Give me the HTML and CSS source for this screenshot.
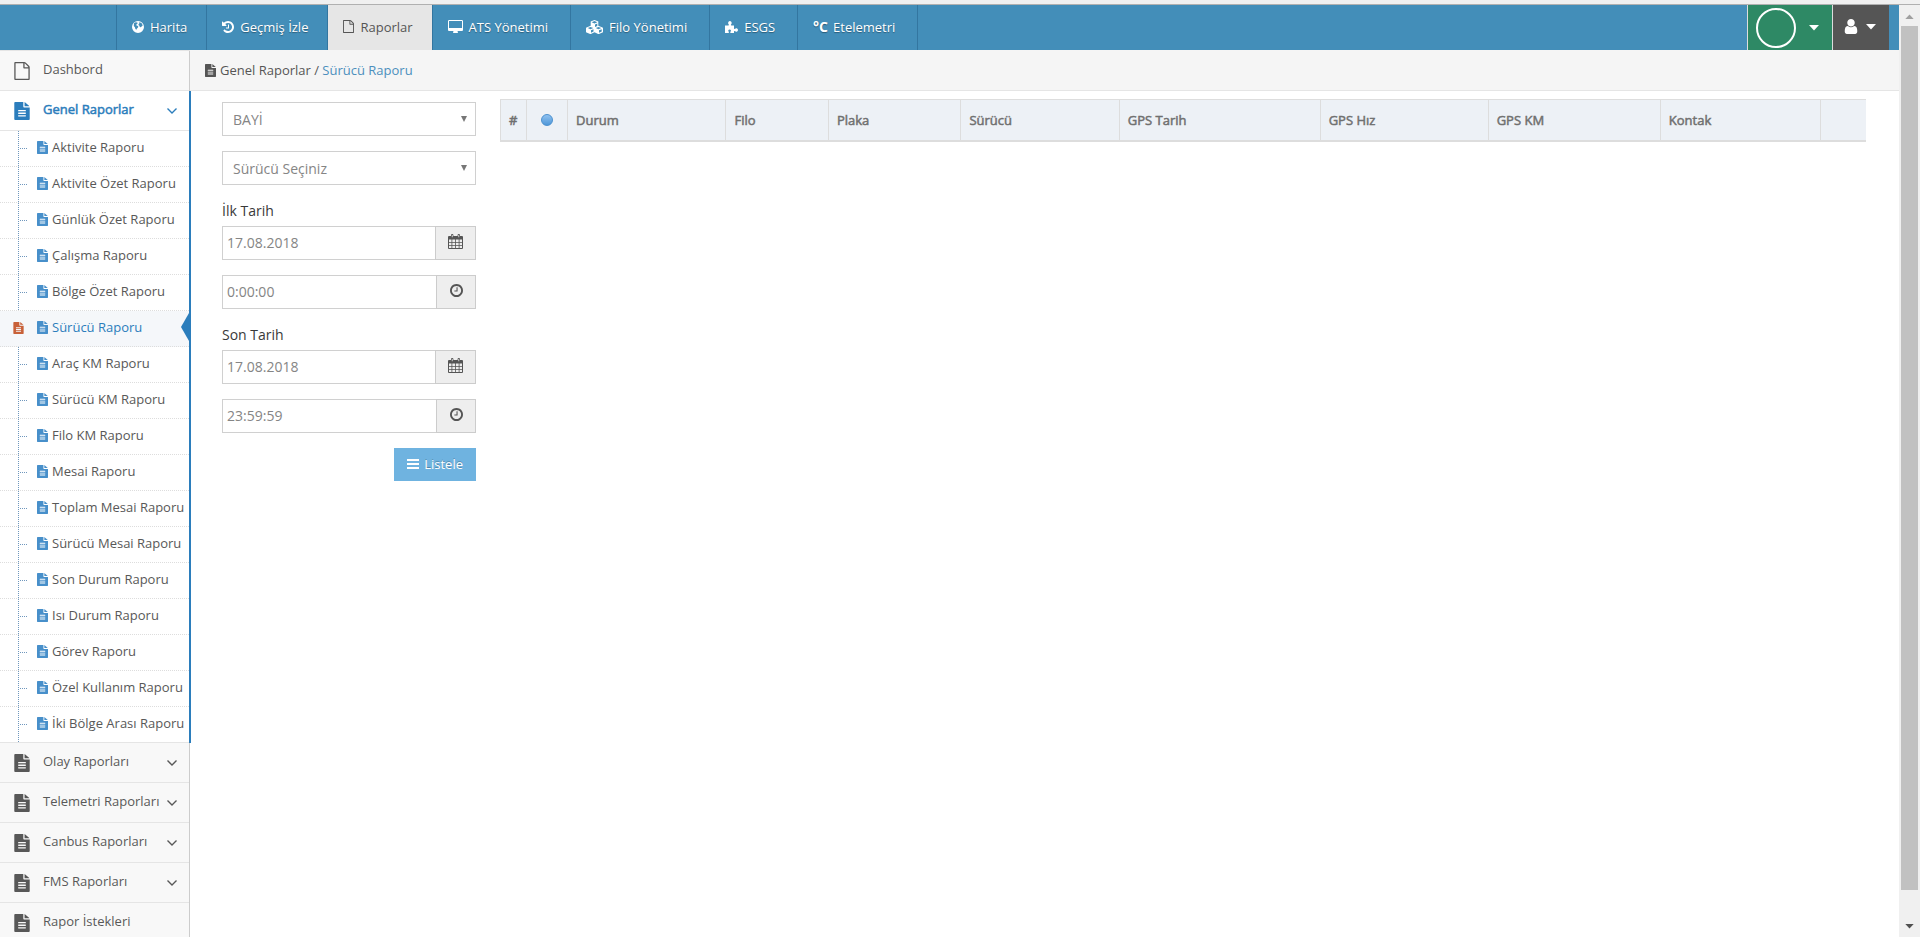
FILE: index.html
```html
<!DOCTYPE html>
<html lang="tr">
<head>
<meta charset="utf-8">
<title>Sürücü Raporu</title>
<link rel="stylesheet" href="styles.css">
</head>
<body>
<svg class="sprite" aria-hidden="true">
  <symbol id="file-text" viewBox="128 0 1536 1792"><path d="M1596 380q14 14 28 36h-472v-412q22 14 36 28zm-476 164h544v1152q0 40-28 68t-68 28h-1344q-40 0-68-28t-28-68v-1600q0-40 28-68t68-28h800v448q0 40 28 68t68 28zm160 864v-64q0-14-9-23t-23-9h-704q-14 0-23 9t-9 23v64q0 14 9 23t23 9h704q14 0 23-9t9-23zm0-256v-64q0-14-9-23t-23-9h-704q-14 0-23 9t-9 23v64q0 14 9 23t23 9h704q14 0 23-9t9-23zm0-256v-64q0-14-9-23t-23-9h-704q-14 0-23 9t-9 23v64q0 14 9 23t23 9h704q14 0 23-9t9-23z"/></symbol>
  <symbol id="file-o" viewBox="128 0 1536 1792"><path d="M1596 380q28 28 48 76t20 88v1152q0 40-28 68t-68 28h-1344q-40 0-68-28t-28-68v-1600q0-40 28-68t68-28h896q40 0 88 20t76 48zm-444-244v376h376q-10-29-22-41l-313-313q-12-12-41-22zm384 1528v-1024h-416q-40 0-68-28t-28-68v-416h-768v1536h1280z"/></symbol>
  <symbol id="globe" viewBox="0 0 12 12"><path fill-rule="evenodd" d="M6 0a6 6 0 1 0 0 12A6 6 0 0 0 6 0zM2 2.2l1.600-.9 1.800.3.200 1-1.200.8-.2.9 1.200.4.900.8-.3 1.100-1 .8-.6 1.300-1-.7-.5-1.700-1.100-1.200.1-1.600zM6.700 1l1.600.4 1.600 1.200.8 1.800-.9.8-.9 1.100-1.100-.4-.4-1.200-1-.6.4-1.400.8-.6z"/></symbol>
  <symbol id="history" viewBox="128 128 1536 1536"><path d="M1664 896q0 156-61 298t-164 245-245 164-298 61q-172 0-327-72.5t-264-204.5q-7-10-6.500-22.500t8.500-20.500l137-138q10-9 25-9 16 2 23 12 73 95 179 147t225 52q104 0 198.500-40.500t163.500-109.500 109.500-163.500 40.500-198.500-40.500-198.500-109.500-163.500-163.500-109.500-198.500-40.500q-98 0-188 35.500t-160 101.500l137 138q31 30 14 69-17 40-59 40h-448q-26 0-45-19t-19-45v-448q0-42 40-59 39-17 69 14l130 129q107-101 244.500-156.500t284.500-55.500q156 0 298 61t245 164 164 245 61 298zm-640-288v448q0 14-9 23t-23 9h-320q-14 0-23-9t-9-23v-64q0-14 9-23t23-9h224v-352q0-14 9-23t23-9h64q14 0 23 9t9 23z"/></symbol>
  <symbol id="desktop" viewBox="-64 0 1920 1664"><path d="M1728 992v-832q0-13-9.500-22.500t-22.500-9.500h-1600q-13 0-22.500 9.500t-9.500 22.500v832q0 13 9.500 22.500t22.500 9.500h1600q13 0 22.500-9.500t9.500-22.500zm128-832v1088q0 66-47 113t-113 47h-544q0 37 16 77.500t32 71 16 43.500q0 26-19 45t-45 19h-512q-26 0-45-19t-19-45q0-14 16-44t32-70 16-78h-544q-66 0-113-47t-47-113v-1088q0-66 47-113t113-47h1600q66 0 113 47t47 113z"/></symbol>
  <symbol id="cubes" viewBox="0 0 17 14"><path fill-rule="evenodd" d="M8.500 0l3.800 1.600v4.100l4.200 1.800q.5.300.5.800v3.400q0 .5-.5.800l-3.600 1.500h-.8l-3.600-1.700-3.600 1.700h-.8L.5 12.500q-.5-.3-.5-.8V8.300q0-.5.500-.8l4.200-1.800V1.600zM8.500 1.100L5.600 2.200l2.900 1.200 2.900-1.200zM9 4.500v2.600l2.300-1V3.500zM4.500 6.900L1.700 8.100l2.800 1.200 2.800-1.200zM12.500 6.900L9.700 8.100l2.800 1.200 2.800-1.200zM5 10.300v2.500l2.500-1.200V9.200zM13 10.300v2.500l2.700-1.200V9.200z"/></symbol>
  <symbol id="puzzle" viewBox="0 0 13 12"><path d="M0 4.500h3.200q.9 0 .7-.8Q3 2.800 3.100 1.700 3.400.1 4.900.1T6.700 1.700q.1 1.100-.8 2-.2.800.7.800H9v2.700q0 .9.800.7 1-.9 2-.6 1.200.4 1.200 1.700t-1.200 1.700q-1 .3-2-.6-.8-.2-.8.600V12H5.800q-.8 0-.5-.9.9-1 .6-1.800-.3-.9-1.300-.9t-1.300.9q-.3.800.6 1.800.3.900-.6.900H0z"/></symbol>
  <symbol id="user" viewBox="256 128 1280 1536"><path d="M1536 1399q0 109-62.500 187t-150.500 78h-854q-88 0-150.500-78t-62.500-187q0-85 8.500-160.500t31.500-152 58.500-131 94-89 134.500-34.500q131 128 313 128t313-128q76 0 134.500 34.500t94 89 58.500 131 31.500 152 8.500 160.500zm-256-887q0 159-112.500 271.500t-271.500 112.500-271.500-112.500-112.500-271.500 112.500-271.500 271.500-112.500 271.500 112.500 112.500 271.500z"/></symbol>
  <symbol id="clock" viewBox="128 128 1536 1536"><path d="M1024 544v448q0 14-9 23t-23 9h-320q-14 0-23-9t-9-23v-64q0-14 9-23t23-9h224v-352q0-14 9-23t23-9h64q14 0 23 9t9 23zm416 352q0-148-73-273t-198-198-273-73-273 73-198 198-73 273 73 273 198 198 273 73 273-73 198-198 73-273zm224 0q0 209-103 385.500t-279.500 279.500-385.500 103-385.500-103-279.500-279.500-103-385.500 103-385.500 279.500-279.500 385.500-103 385.500 103 279.500 279.500 103 385.500z"/></symbol>
  <symbol id="calendar" viewBox="0 0 15 15"><path fill-rule="evenodd" d="M1 2h2V1q0-1 1.200-1T5.400 1v1h4.200V1q0-1 1.200-1T12 1v1h2q1 0 1 1v11q0 1-1 1H1q-1 0-1-1V3q0-1 1-1zM1 5.500V8h2.500V5.500zm3.300 0V8h2.800V5.500zm3.600 0V8h2.800V5.500zm3.600 0V8H14V5.500zM1 8.700v2.500h2.500V8.700zm3.300 0v2.500h2.800V8.700zm3.600 0v2.500h2.800V8.700zm3.600 0v2.500H14V8.700zM1 12v2h2.500v-2zm3.300 0v2h2.800v-2zm3.600 0v2h2.800v-2zm3.600 0v2H14v-2zM3.800 1v2.200h.8V1zm6.600 0v2.200h.8V1z"/></symbol>
  <symbol id="chevron" viewBox="0 0 10 6"><path d="M.5.600L5 5 9.500.600" fill="none" stroke="currentColor" stroke-width="1.400"/></symbol>
  <symbol id="caret" viewBox="0 0 10 6"><path d="M0 0h10L5 5.500z"/></symbol>
  <symbol id="bars" viewBox="0 0 12 10"><path d="M0 0h12v2H0zM0 4h12v2H0zM0 8h12v2H0z"/></symbol>
</svg>

<div class="top-strip"></div>
<div class="window">
  <div class="app">
    <header class="navbar">
      <nav class="nav">
        <a href="#" class="nav-item"><svg class="i12"><use href="#globe"/></svg>Harita</a>
        <a href="#" class="nav-item"><svg class="i12"><use href="#history"/></svg>Geçmiş İzle</a>
        <a href="#" class="nav-item active"><svg class="i-page"><use href="#file-o"/></svg>Raporlar</a>
        <a href="#" class="nav-item wide"><svg class="i-desktop"><use href="#desktop"/></svg>ATS Yönetimi</a>
        <a href="#" class="nav-item wide"><svg class="i-cubes"><use href="#cubes"/></svg>Filo Yönetimi</a>
        <a href="#" class="nav-item wide"><svg class="i-puzzle"><use href="#puzzle"/></svg>ESGS</a>
        <a href="#" class="nav-item wide last"><span class="celsius">°C</span>Etelemetri</a>
      </nav>
      <div class="account">
        <button type="button" class="brand-btn" aria-label="Firma"><span class="ring"></span><svg class="caret"><use href="#caret"/></svg></button>
        <button type="button" class="user-btn" aria-label="Kullanıcı"><svg class="i-user"><use href="#user"/></svg><svg class="caret"><use href="#caret"/></svg></button>
      </div>
    </header>

    <div class="body">
      <aside class="sidebar">
        <a href="#" class="group"><svg class="i-big"><use href="#file-o"/></svg><span>Dashbord</span></a>
        <div class="open-group">
          <a href="#" class="group open"><svg class="i-big"><use href="#file-text"/></svg><span>Genel Raporlar</span><svg class="chevron"><use href="#chevron"/></svg></a>
          <ul class="submenu">
            <li><a href="#"><svg class="i-sub"><use href="#file-text"/></svg>Aktivite Raporu</a></li>
            <li><a href="#"><svg class="i-sub"><use href="#file-text"/></svg>Aktivite Özet Raporu</a></li>
            <li><a href="#"><svg class="i-sub"><use href="#file-text"/></svg>Günlük Özet Raporu</a></li>
            <li><a href="#"><svg class="i-sub"><use href="#file-text"/></svg>Çalışma Raporu</a></li>
            <li><a href="#"><svg class="i-sub"><use href="#file-text"/></svg>Bölge Özet Raporu</a></li>
            <li class="current"><svg class="marker"><use href="#file-text"/></svg><a href="#"><svg class="i-sub"><use href="#file-text"/></svg>Sürücü Raporu</a></li>
            <li><a href="#"><svg class="i-sub"><use href="#file-text"/></svg>Araç KM Raporu</a></li>
            <li><a href="#"><svg class="i-sub"><use href="#file-text"/></svg>Sürücü KM Raporu</a></li>
            <li><a href="#"><svg class="i-sub"><use href="#file-text"/></svg>Filo KM Raporu</a></li>
            <li><a href="#"><svg class="i-sub"><use href="#file-text"/></svg>Mesai Raporu</a></li>
            <li><a href="#"><svg class="i-sub"><use href="#file-text"/></svg>Toplam Mesai Raporu</a></li>
            <li><a href="#"><svg class="i-sub"><use href="#file-text"/></svg>Sürücü Mesai Raporu</a></li>
            <li><a href="#"><svg class="i-sub"><use href="#file-text"/></svg>Son Durum Raporu</a></li>
            <li><a href="#"><svg class="i-sub"><use href="#file-text"/></svg>Isı Durum Raporu</a></li>
            <li><a href="#"><svg class="i-sub"><use href="#file-text"/></svg>Görev Raporu</a></li>
            <li><a href="#"><svg class="i-sub"><use href="#file-text"/></svg>Özel Kullanım Raporu</a></li>
            <li><a href="#"><svg class="i-sub"><use href="#file-text"/></svg>İki Bölge Arası Raporu</a></li>
          </ul>
        </div>
        <a href="#" class="group"><svg class="i-big"><use href="#file-text"/></svg><span>Olay Raporları</span><svg class="chevron"><use href="#chevron"/></svg></a>
        <a href="#" class="group"><svg class="i-big"><use href="#file-text"/></svg><span>Telemetri Raporları</span><svg class="chevron"><use href="#chevron"/></svg></a>
        <a href="#" class="group"><svg class="i-big"><use href="#file-text"/></svg><span>Canbus Raporları</span><svg class="chevron"><use href="#chevron"/></svg></a>
        <a href="#" class="group"><svg class="i-big"><use href="#file-text"/></svg><span>FMS Raporları</span><svg class="chevron"><use href="#chevron"/></svg></a>
        <a href="#" class="group"><svg class="i-big"><use href="#file-text"/></svg><span>Rapor İstekleri</span></a>
      </aside>

      <main class="main">
        <div class="breadcrumb"><svg class="i-sub"><use href="#file-text"/></svg><span>Genel Raporlar / <a href="#">Sürücü Raporu</a></span></div>
        <div class="content">
          <form class="filters">
            <div class="select"><select aria-label="Bayi"><option>BAYİ</option></select></div>
            <div class="select"><select aria-label="Sürücü"><option>Sürücü Seçiniz</option></select></div>
            <div class="field">
              <label for="d1">İlk Tarih</label>
              <div class="input-group"><input id="d1" type="text" value="17.08.2018"><button type="button" class="addon date" aria-label="Takvim"><svg class="i-cal"><use href="#calendar"/></svg></button></div>
            </div>
            <div class="input-group"><input type="text" value="0:00:00" aria-label="İlk saat"><button type="button" class="addon" aria-label="Saat"><svg class="i-clock"><use href="#clock"/></svg></button></div>
            <div class="field">
              <label for="d2">Son Tarih</label>
              <div class="input-group"><input id="d2" type="text" value="17.08.2018"><button type="button" class="addon date" aria-label="Takvim"><svg class="i-cal"><use href="#calendar"/></svg></button></div>
            </div>
            <div class="input-group"><input type="text" value="23:59:59" aria-label="Son saat"><button type="button" class="addon" aria-label="Saat"><svg class="i-clock"><use href="#clock"/></svg></button></div>
            <button type="button" class="submit"><svg class="i-bars"><use href="#bars"/></svg>Listele</button>
          </form>
          <div class="results">
            <table>
              <colgroup>
                <col class="c-no"><col class="c-dot"><col class="c-durum"><col class="c-filo"><col class="c-plaka"><col class="c-surucu"><col class="c-tarih"><col class="c-hiz"><col class="c-km"><col class="c-kontak"><col>
              </colgroup>
              <thead>
                <tr><th>#</th><th class="dot-cell"><span class="dot"></span></th><th>Durum</th><th>Filo</th><th>Plaka</th><th>Sürücü</th><th>GPS Tarih</th><th>GPS Hız</th><th>GPS KM</th><th>Kontak</th><th></th></tr>
              </thead>
            </table>
          </div>
        </div>
      </main>
    </div>
  </div>
  <div class="scrollbar">
    <svg class="arrow up"><use href="#caret"/></svg>
    <div class="track"><div class="thumb"></div></div>
    <svg class="arrow down"><use href="#caret"/></svg>
  </div>
</div>
</body>
</html>
```

FILE: styles.css
```css
* { box-sizing: border-box; }

body {
  margin: 0;
  height: 100vh;
  display: flex;
  flex-direction: column;
  overflow: hidden;
  background: #fff;
  color: #393939;
  font-family: "Open Sans", "Noto Sans", sans-serif;
  font-size: 13px;
  line-height: 20px;
}

a { color: inherit; text-decoration: none; }
button { margin: 0; padding: 0; border: 0; font: inherit; color: inherit; cursor: pointer; }
svg { display: block; flex: none; fill: currentColor; }
.sprite { position: absolute; width: 0; height: 0; }

.top-strip { flex: none; height: 5px; background: #f0f0f0; border-bottom: 1px solid #b0b0b0; }
.window { flex: 1; min-height: 0; display: flex; }
.app { flex: 1; min-width: 0; display: flex; flex-direction: column; }

/* Top navigation */
.navbar {
  flex: none;
  height: 45px;
  display: flex;
  justify-content: space-between;
  padding: 0 10px 0 116px;
  background: #438eb9;
  color: #fff;
}
.nav, .account { display: flex; }
.nav-item {
  display: flex;
  align-items: center;
  gap: 6px;
  padding: 0 19px 2px 15px;
  border-left: 1px solid #3376a0;
  text-shadow: 0 1px 1px rgba(0, 0, 0, .35);
}
.nav-item.wide { padding-right: 22px; }
.nav-item.last { border-right: 1px solid #3376a0; gap: 5px; }
.nav-item.active { background: #e6e6e6; color: #555; text-shadow: none; }
.celsius { font-weight: 700; font-size: 14px; }

.i12 { width: 12px; height: 12px; }
.i-page { width: 11px; height: 13px; }
.i-desktop { width: 15px; height: 13px; }
.i-cubes { width: 17px; height: 14px; }
.i-puzzle { width: 13px; height: 12px; }
.i-user { width: 14px; height: 15px; }
.caret { width: 10px; height: 6px; }

.brand-btn, .user-btn {
  display: flex;
  align-items: center;
  border-left: 1px solid #ddd;
  color: #fff;
}
.brand-btn { gap: 13px; padding: 0 13px 0 8px; background: #2e8965; }
.user-btn { gap: 8px; padding: 0 13px 2px 11px; background: #555; }
.ring { width: 40px; height: 40px; border: 2px solid #fff; border-radius: 50%; }

/* Sidebar */
.body { flex: 1; min-height: 0; display: flex; }
.sidebar {
  flex: none;
  width: 190px;
  background: #f8f8f8;
  border-top: 1px solid #e5e5e5;
  box-shadow: inset -1px 0 #ccc;
  color: #585858;
}
.group {
  display: flex;
  align-items: center;
  height: 40px;
  margin-right: 1px;
  padding: 0 12px 0 14px;
  border-bottom: 1px solid #e5e5e5;
}
.group span { flex: 1; margin-left: 13px; padding-bottom: 4px; white-space: nowrap; }
.i-big { width: 16px; height: 18px; }
.chevron { width: 10px; height: 6px; }
.open-group { background: #fff; border-right: 2px solid #2b7dbc; width: 191px; }
.group.open { margin: 0; color: #2b7dbc; -webkit-text-stroke: 0.5px #2b7dbc; }

.submenu {
  position: relative;
  margin: 0;
  padding: 0;
  list-style: none;
  border-bottom: 1px solid #e5e5e5;
}
.submenu::before {
  content: "";
  position: absolute;
  top: 0;
  bottom: 0;
  left: 18px;
  border-left: 1px dotted #6f97bd;
}
.submenu li { position: relative; height: 36px; border-bottom: 1px dotted #ddd; }
.submenu li:last-child { height: 35px; border-bottom: 0; }
.submenu li::before {
  content: "";
  position: absolute;
  top: 17px;
  left: 20px;
  width: 7px;
  border-top: 1px dotted #6f97bd;
}
.submenu a {
  display: flex;
  align-items: center;
  gap: 4px;
  height: 32px;
  padding-left: 37px;
  white-space: nowrap;
}
.i-sub { width: 11px; height: 13px; }
.submenu .i-sub { color: #478fca; }
.submenu .current { background: #f5f7fa; color: #2b7dbc; }
.submenu .current::before { display: none; }
.submenu .current::after {
  content: "";
  position: absolute;
  top: 2px;
  right: 0;
  border: solid transparent;
  border-width: 14px 8px 14px 0;
  border-right-color: #2b7dbc;
}
.marker { position: absolute; top: 11px; left: 13px; width: 11px; height: 12px; color: #c86139; }

/* Page */
.main { flex: 1; min-width: 0; }
.breadcrumb {
  display: flex;
  align-items: center;
  gap: 4px;
  height: 41px;
  padding-left: 15px;
  background: #f5f5f5;
  border-bottom: 1px solid #e5e5e5;
  color: #555;
}
.breadcrumb a { color: #4c8fbd; }
.content { display: flex; align-items: flex-start; gap: 24px; padding: 8px 33px 0 32px; }
.filters {
  flex: none;
  width: 254px;
  display: flex;
  flex-direction: column;
  gap: 15px;
  padding-top: 3px;
  font-size: 14px;
}
.filters label { display: block; height: 26px; line-height: 22px; }
.select { position: relative; }
.select::after {
  content: "";
  position: absolute;
  top: 14px;
  right: 9px;
  border: solid transparent;
  border-width: 6px 3px 0;
  border-top-color: #777;
}
select, input {
  height: 34px;
  border: 1px solid #d0d0d0;
  border-radius: 0;
  background: #fff;
  color: #858585;
  font: inherit;
}
select { display: block; width: 100%; padding: 2px 24px 0 10px; appearance: none; }
input { flex: 1; min-width: 0; padding: 0 4px 2px; border-right: 0; }
.input-group { display: flex; }
.addon {
  width: 40px;
  height: 34px;
  display: flex;
  align-items: center;
  justify-content: center;
  padding-bottom: 3px;
  border: 1px solid #ccc;
  background: #eee;
  color: #555;
}
.addon.date { width: 41px; }
.i-cal { width: 15px; height: 15px; }
.i-clock { width: 13px; height: 13px; }
.submit {
  align-self: flex-end;
  display: flex;
  align-items: center;
  gap: 5px;
  height: 33px;
  padding: 0 13px 2px;
  background: #6fb3e0;
  color: #fff;
  font-size: 13px;
  text-shadow: 0 -1px 0 rgba(0, 0, 0, .25);
}
.i-bars { width: 12px; height: 10px; }

/* Result grid */
.results { flex: 1; min-width: 0; }
table { width: 100%; table-layout: fixed; border-collapse: separate; border-spacing: 0; }
th {
  height: 43px;
  padding: 0 8px;
  background: #edf1f6;
  border: 1px solid #ddd;
  border-width: 1px 0 2px 1px;
  color: #707070;
  font-weight: 400;
  -webkit-text-stroke: 0.5px #707070;
  text-align: left;
}
.dot-cell { padding: 0 14px; }
.dot {
  display: block;
  width: 12px;
  height: 12px;
  border: 1px solid #4a90cf;
  border-radius: 50%;
  background: linear-gradient(#8fc1f0, #4f97d8);
}
.c-no { width: 26px; }
.c-dot { width: 41px; }
.c-durum { width: 11.6%; }
.c-filo { width: 7.5%; }
.c-plaka { width: 9.7%; }
.c-surucu { width: 11.6%; }
.c-tarih { width: 14.7%; }
.c-hiz { width: 12.3%; }
.c-km { width: 12.6%; }
.c-kontak { width: 11.7%; }

/* Scroll rail */
.scrollbar {
  flex: none;
  width: 21px;
  display: flex;
  flex-direction: column;
  align-items: center;
  padding: 9px 0 8px;
  background: #f0f0f0;
}
.arrow { width: 9px; height: 5px; color: #505050; }
.arrow.up { transform: rotate(180deg); color: #a0a0a0; }
.track { flex: 1; width: 17px; padding: 7px 0; }
.thumb { height: 97%; background: #c1c1c1; }
```
